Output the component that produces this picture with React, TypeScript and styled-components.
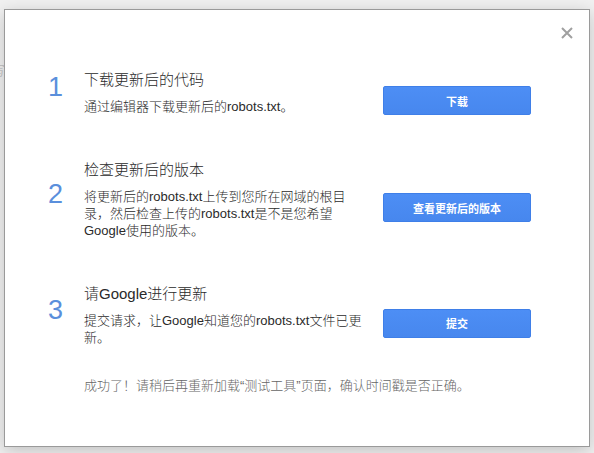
import React from "react";
import styled, { createGlobalStyle } from "styled-components";

const Global = createGlobalStyle`
  html, body { margin: 0; padding: 0; background: #f1f1f1; }
  body {
    font-family: "Liberation Sans", Arial, "Noto Sans CJK SC", sans-serif;
    color: #222;
  }
`;

const Page = styled.div`
  position: relative;
  width: 594px;
  height: 453px;
  overflow: hidden;
  padding: 9px 0 0 4px;
  box-sizing: border-box;
`;

const StrayGlyph = styled.span`
  position: absolute;
  left: -8px;
  top: 60px;
  font-size: 13px;
  color: #c8c8c8;
  font-family: "Noto Sans CJK SC", sans-serif;
`;

const Dialog = styled.div`
  position: relative;
  width: 586px;
  height: 438px;
  box-sizing: border-box;
  background: #fff;
  border: 1px solid #9a9a9a;
  box-shadow: 0 4px 16px rgba(0, 0, 0, 0.2);
  padding: 60px 0 0 43px;
  display: flex;
  flex-direction: column;
`;

const Close = styled.button`
  position: absolute;
  top: 15px;
  right: 14px;
  width: 16px;
  height: 16px;
  padding: 0;
  border: 0;
  background: transparent;
  display: flex;
  align-items: center;
  justify-content: center;
  cursor: pointer;
`;

const Steps = styled.div`
  display: flex;
  flex-direction: column;
  gap: 45px;
`;

const Step = styled.div`
  display: flex;
  align-items: center;
`;

const Num = styled.div`
  width: 36px;
  flex: none;
  font-size: 27px;
  line-height: 31px;
  color: #5a8fdc;
  font-family: "Liberation Sans", Arial, sans-serif;
  margin-bottom: 10px;
`;

const TextCol = styled.div`
  width: 285px;
  flex: none;
  margin-right: 14px;
  display: flex;
  flex-direction: column;
  gap: 8px;
`;

const Title = styled.div`
  font-size: 15px;
  line-height: 20px;
  font-weight: 300;
  color: #2a2a2a;
  font-family: "Liberation Sans", Arial, "Noto Sans CJK SC", sans-serif;
`;

const Desc = styled.div`
  font-size: 13px;
  line-height: 17px;
  font-weight: 300;
  color: #2a2a2a;
  font-family: "Liberation Sans", Arial, "Noto Sans CJK SC", sans-serif;
  line-break: strict;
`;

const ActionButton = styled.button`
  width: 148px;
  height: 29px;
  flex: none;
  box-sizing: border-box;
  margin-top: 16px;
  border: 1px solid #3f7fe8;
  border-radius: 2px;
  background: linear-gradient(#4d8ef5, #4787ee);
  color: #fff;
  font-size: 11px;
  font-weight: bold;
  font-family: "Noto Sans CJK SC", sans-serif;
  cursor: pointer;
  padding: 0;
`;

const Footer = styled.div`
  margin: 31px 0 0 36px;
  font-size: 13px;
  line-height: 18px;
  font-weight: 300;
  color: #666;
  font-family: "Liberation Sans", Arial, "Noto Sans CJK SC", sans-serif;
`;

const steps = [
  {
    n: "1",
    title: "下载更新后的代码",
    desc: "通过编辑器下载更新后的robots.txt。",
    action: "下载",
  },
  {
    n: "2",
    title: "检查更新后的版本",
    desc: "将更新后的robots.txt上传到您所在网域的根目录，然后检查上传的robots.txt是不是您希望Google使用的版本。",
    action: "查看更新后的版本",
  },
  {
    n: "3",
    title: "请Google进行更新",
    desc: "提交请求，让Google知道您的robots.txt文件已更新。",
    action: "提交",
  },
];

export default function App() {
  return (
    <>
      <Global />
      <Page>
        <StrayGlyph>写</StrayGlyph>
        <Dialog>
          <Close aria-label="关闭">
            <svg width="12" height="12" viewBox="0 0 12 12">
              <path d="M1 1 L11 11 M11 1 L1 11" stroke="#a0a0a0" strokeWidth="2" />
            </svg>
          </Close>
          <Steps>
            {steps.map((s) => (
              <Step key={s.n}>
                <Num>{s.n}</Num>
                <TextCol>
                  <Title>{s.title}</Title>
                  <Desc>{s.desc}</Desc>
                </TextCol>
                <ActionButton>{s.action}</ActionButton>
              </Step>
            ))}
          </Steps>
          <Footer>成功了！请稍后再重新加载“测试工具”页面，确认时间戳是否正确。</Footer>
        </Dialog>
      </Page>
    </>
  );
}
